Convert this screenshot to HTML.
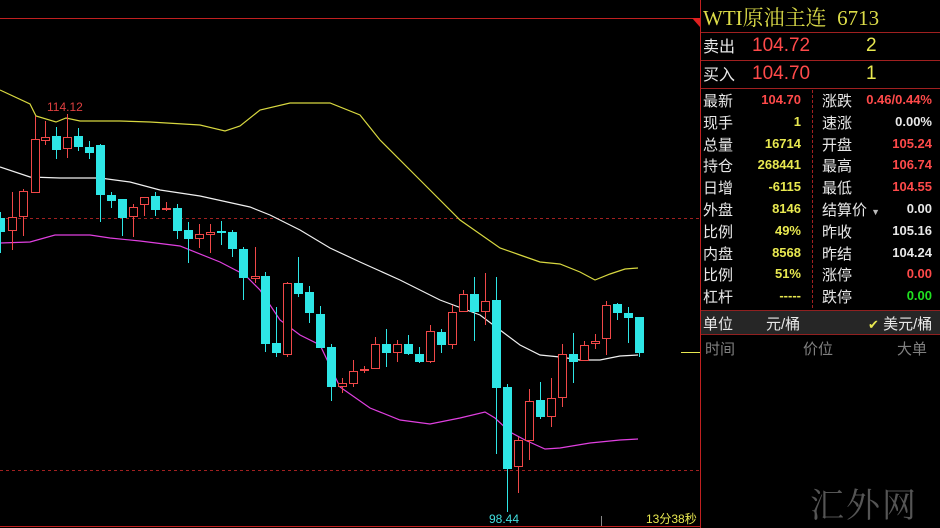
<!DOCTYPE html>
<html><head><meta charset="utf-8"><style>
*{margin:0;padding:0;box-sizing:border-box}
body{width:940px;height:528px;background:#000;overflow:hidden;position:relative;font-family:"Liberation Sans","Noto Sans CJK SC",sans-serif}
.p{position:absolute;white-space:nowrap}
.lab{color:#e8e8e8;font-size:15px}
.v{font-size:13px;font-weight:bold;text-align:right}
.y{color:#e8e850}.r{color:#ff4a4a}.w{color:#e8e8e8}.g{color:#20e020}
</style></head><body>
<svg width="940" height="528" style="position:absolute;left:0;top:0">
<line x1="0" y1="18.5" x2="700" y2="18.5" stroke="#c02020"/>
<polygon points="692,18 700,18 700,27" fill="#e02020"/>
<line x1="700.5" y1="0" x2="700.5" y2="528" stroke="#c02020"/>
<line x1="0" y1="526.5" x2="700" y2="526.5" stroke="#c02020"/>
<line x1="0" y1="218.5" x2="700" y2="218.5" stroke="#a02020" stroke-dasharray="3,3"/>
<line x1="0" y1="470.5" x2="700" y2="470.5" stroke="#a02020" stroke-dasharray="3,3"/>
<line x1="601.5" y1="516" x2="601.5" y2="526" stroke="#888"/>
<line x1="681" y1="352.5" x2="700" y2="352.5" stroke="#e8e850"/>
<g fill="none" stroke-width="1.2">
<polyline stroke="#d8d840" points="0,90 30,104 36,116 56,122 66,118 80,121 120,121 150,122 200,125 225,131 240,126 260,110 290,103 330,103 360,115 380,140 420,180 460,220 500,248 520,255 540,262 560,264 580,272 595,280 610,274 625,269 638,268"/>
<polyline stroke="#f0f0f0" points="0,167 30,177 60,178 100,178 130,182 160,190 200,196 250,207 270,215 300,230 330,248 360,262 400,280 440,300 480,315 500,330 520,345 540,355 560,357 580,360 600,360 620,356 638,355"/>
<polyline stroke="#e040e0" points="0,243 30,242 55,235 90,235 110,238 140,241 180,246 220,262 245,275 260,290 280,320 300,335 320,345 340,387 370,408 400,420 430,424 460,418 485,412 495,418 510,432 525,440 545,449 560,448 590,443 620,440 638,439"/>
</g>
<g id="k"></g>
<text x="47" y="111" fill="#e04040" font-size="12" font-family="Liberation Sans">114.12</text>
<text x="489" y="523" fill="#40e0e0" font-size="12" font-family="Liberation Sans">98.44</text>
<text x="646" y="523" fill="#e8e850" font-size="12" font-family="Liberation Sans,Noto Sans CJK SC">13分38秒</text>
</svg>
<script>
var d=[
["c",-4,218,232,212,253],["r",8,217,231,192,250],["r",19,191,217,189,236],["r",31,139,193,116,193],["r",41,137,141,121,145],["c",52,136,150,127,159],["r",63,137,149,114,158],["c",74,136,147,128,151],["c",85,147,153,141,159],["c",96,145,195,144,222],["c",107,195,201,192,208],["c",118,199,218,199,236],["r",129,207,217,204,237],["r",140,197,205,197,216],["c",151,196,210,192,216],["r",162,208,210,202,211],["c",173,208,231,204,239],["c",184,230,239,222,263],["r",195,234,239,224,248],["r",206,232,235,224,253],["c",217,231,233,221,245],["c",228,232,249,230,257],["c",239,249,278,247,300],["r",251,276,279,247,283],["c",261,276,344,272,352],["c",272,343,353,307,357],["r",283,283,355,282,357],["c",294,283,294,257,297],["c",305,292,313,286,323],["c",316,314,348,306,348],["c",327,347,387,344,401],["r",338,383,387,378,393],["r",349,371,384,360,387],["r",360,369,371,366,373],["r",371,344,369,337,369],["c",382,344,353,329,367],["r",393,344,353,340,362],["c",404,344,354,335,355],["c",415,354,362,347,363],["r",426,331,362,325,363],["c",437,332,345,329,353],["r",448,312,345,305,349],["r",459,294,312,290,312],["c",470,294,312,277,341],["r",481,301,312,273,325],["c",492,300,388,277,454],["c",503,387,469,384,512],["r",514,440,467,437,493],["r",525,401,441,389,460],["c",536,400,417,382,419],["r",547,398,417,378,427],["r",558,354,398,344,407],["c",569,354,362,333,383],["r",580,345,361,341,361],["r",591,341,344,334,349],["r",602,305,339,301,355],["c",613,304,313,303,320],["c",624,313,318,307,343],["c",635,317,353,317,357]];
var s="";d.forEach(function(a){var x=a[1],cx=x+4.5,col=a[0]=="c"?"#2ee6e6":"#f04848";
s+='<line x1="'+cx+'" y1="'+a[4]+'" x2="'+cx+'" y2="'+a[5]+'" stroke="'+col+'"/>';
if(a[0]=="c")s+='<rect x="'+x+'" y="'+a[2]+'" width="9" height="'+Math.max(1,a[3]-a[2])+'" fill="'+col+'"/>';
else s+='<rect x="'+(x+0.5)+'" y="'+(a[2]+0.5)+'" width="8" height="'+Math.max(1,a[3]-a[2]-1)+'" fill="#000" stroke="'+col+'"/>';});
document.getElementById("k").innerHTML=s;
</script>
<div class="p" style="left:701px;top:0;width:239px;height:33px;border-bottom:1px solid #a02020"></div>
<div class="p" style="left:703px;top:2px;font-size:21px;color:#dcdc48;font-family:'Liberation Serif','Noto Serif CJK SC',serif">WTI原油主连&nbsp; 6713</div>
<div class="p" style="left:701px;top:60px;width:239px;border-top:1px solid #a02020"></div>
<div class="p" style="left:701px;top:88px;width:239px;border-top:1px solid #a02020"></div>
<div class="p lab" style="left:703px;top:33px;font-size:16px">卖出</div>
<div class="p r" style="left:752px;top:35px;font-size:19px">104.72</div>
<div class="p y" style="left:866px;top:35px;font-size:19px">2</div>
<div class="p lab" style="left:703px;top:61px;font-size:16px">买入</div>
<div class="p r" style="left:752px;top:63px;font-size:19px">104.70</div>
<div class="p y" style="left:866px;top:63px;font-size:19px">1</div>
<div class="p" style="left:812px;top:90px;height:218px;border-left:1px dashed #a02020"></div>
<div id="rows"></div>
<script>
var R=[["最新","104.70","r","涨跌","0.46/0.44%","r"],["现手","1","y","速涨","0.00%","w"],["总量","16714","y","开盘","105.24","r"],["持仓","268441","y","最高","106.74","r"],["日增","-6115","y","最低","104.55","r"],["外盘","8146","y","结算价","0.00","w"],["比例","49%","y","昨收","105.16","w"],["内盘","8568","y","昨结","104.24","w"],["比例","51%","y","涨停","0.00","r"],["杠杆","-----","y","跌停","0.00","g"]];
var h="";R.forEach(function(a,i){var t=90+i*21.8;
h+='<div class="p lab" style="left:703px;top:'+t+'px">'+a[0]+'</div><div class="p v '+a[2]+'" style="right:139px;top:'+(t+2)+'px">'+a[1]+'</div><div class="p lab" style="left:822px;top:'+t+'px">'+a[3]+(i==5?' <span style="font-size:9px;color:#bbb">▼</span>':'')+'</div><div class="p v '+a[5]+'" style="right:8px;top:'+(t+2)+'px">'+a[4]+'</div>';});
document.getElementById("rows").innerHTML=h;
</script>
<div class="p" style="left:701px;top:310px;width:239px;height:25px;background:#262626;border-top:1px solid #902020;border-bottom:1px solid #902020"></div>
<div class="p lab" style="left:703px;top:313px">单位</div>
<div class="p lab" style="left:766px;top:313px">元/桶</div>
<div class="p lab" style="left:868px;top:313px"><span class="y" style="font-size:13px">✔</span> 美元/桶</div>
<div class="p" style="left:705px;top:338px;color:#808080;font-size:15px">时间</div>
<div class="p" style="left:803px;top:338px;color:#808080;font-size:15px">价位</div>
<div class="p" style="left:897px;top:338px;color:#808080;font-size:15px">大单</div>
<div class="p" style="left:810px;top:478px;color:#555;font-size:34px;font-family:'Noto Serif CJK SC',serif;letter-spacing:2px">汇外网</div>
</body></html>
